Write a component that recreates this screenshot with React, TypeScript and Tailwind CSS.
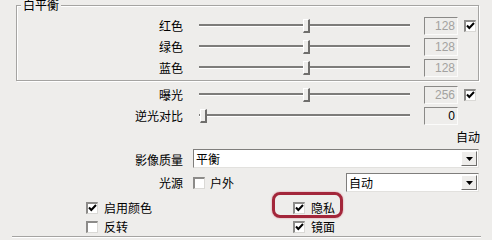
import React from "react";

function Check({ checked }: { checked?: boolean }) {
  return (
    <div className="w-[12px] h-[12px] shrink-0 bg-white border-t-2 border-l-2 border-t-[#8c8b89] border-l-[#8c8b89] border-r border-b border-r-[#dad9d6] border-b-[#dad9d6] flex items-center justify-center">
      {checked && (
        <svg width="9" height="8" viewBox="0 0 9 8">
          <polyline points="1,3.5 3.3,6 8,1" fill="none" stroke="#000" strokeWidth="2" />
        </svg>
      )}
    </div>
  );
}

function Slider({ pos }: { pos: number }) {
  return (
    <div className="relative w-[211px] h-[14px] flex items-center">
      <div className="w-full h-[3px] border-t-2 border-t-[#7d7c7a] border-b border-b-white" />
      <div
        className="absolute top-[0px] w-[7px] h-[14px] bg-[#eeedeb] border-t border-l border-t-white border-l-white border-r-2 border-b-2 border-r-[#6f6e6c] border-b-[#6f6e6c]"
        style={{ left: pos }}
      />
    </div>
  );
}

function NumBox({ value, enabled }: { value: string; enabled?: boolean }) {
  return (
    <div
      className={`w-[34px] h-[18px] shrink-0 border-t border-l border-t-[#8a8987] border-l-[#8a8987] border-r border-b border-r-[#fbfbfa] border-b-[#fbfbfa] flex items-center justify-end pr-[2px] font-['Liberation_Sans',sans-serif] text-[12px] ${
        enabled ? "text-black" : "text-[#a3a2a0]"
      }`}
    >
      {value}
    </div>
  );
}

function ArrowBtn() {
  return (
    <div className="w-[16px] h-[15px] shrink-0 bg-[#eeedeb] border-t border-l border-t-white border-l-white border-r border-b border-r-[#6f6e6c] border-b-[#6f6e6c] flex items-center justify-center">
      <svg width="7" height="4" viewBox="0 0 7 4">
        <polygon points="0,0 7,0 3.5,4" fill="#000" />
      </svg>
    </div>
  );
}

function Dropdown({ text, width }: { text: string; width: string }) {
  return (
    <div
      className={`${width} h-[19px] shrink-0 bg-white border-t border-l border-t-[#7f7e7c] border-l-[#7f7e7c] border-r border-b border-r-[#e2e1de] border-b-[#e2e1de] flex items-center justify-between pl-[2px] pr-[1px]`}
    >
      <span className="pt-[1px]">{text}</span>
      <ArrowBtn />
    </div>
  );
}

function SliderRow({
  label,
  labelW,
  pos,
  value,
  enabled,
  checked,
}: {
  label: string;
  labelW: string;
  pos: number;
  value: string;
  enabled?: boolean;
  checked?: boolean;
}) {
  return (
    <div className="flex items-center h-[21px]">
      <div className={`${labelW} text-right`}>{label}</div>
      <div className="ml-[16px]">
        <Slider pos={pos} />
      </div>
      <div className="ml-[14px]">
        <NumBox value={value} enabled={enabled} />
      </div>
      {checked !== undefined && (
        <div className="ml-[6px]">
          <Check checked={checked} />
        </div>
      )}
    </div>
  );
}

export default function App() {
  return (
    <div className="relative w-[492px] h-[240px] overflow-hidden bg-[#eeedeb] text-[12px] leading-none text-black font-['Noto_Sans_CJK_SC','Noto_Sans',sans-serif]">
      <div className="pt-[5px]">
        <div className="relative ml-[16px] w-[463px] h-[76px] border border-[#a5a4a2] shadow-[inset_1px_1px_0_#ffffff,1px_1px_0_#ffffff] pt-[9px]">
          <div className="absolute -top-[7px] left-[4px] px-[2px] bg-[#eeedeb]">白平衡</div>
          <SliderRow label="红色" labelW="w-[166px]" pos={104} value="128" checked />
          <SliderRow label="绿色" labelW="w-[166px]" pos={104} value="128" />
          <SliderRow label="蓝色" labelW="w-[166px]" pos={104} value="128" />
        </div>
      </div>
      <div className="mt-[3px]">
        <SliderRow label="曝光" labelW="w-[183px]" pos={104} value="256" checked />
        <SliderRow label="逆光对比" labelW="w-[183px]" pos={1} value="0" enabled />
      </div>
      <div className="h-[22px] flex items-center justify-end pr-[12px]">自动</div>
      <div className="mt-[1px] flex items-center h-[19px]">
        <div className="w-[183px] text-right pt-[3px]">影像质量</div>
        <div className="ml-[10px]">
          <Dropdown text="平衡" width="w-[286px]" />
        </div>
      </div>
      <div className="mt-[5px] flex items-center h-[19px] w-[479px]">
        <div className="w-[183px] text-right">光源</div>
        <div className="ml-[10px]">
          <Check />
        </div>
        <div className="ml-[5px]">户外</div>
        <div className="ml-auto">
          <Dropdown text="自动" width="w-[133px]" />
        </div>
      </div>
      <div className="mt-[6px] grid grid-cols-[207px_1fr] pl-[86px]">
        <div className="flex items-center h-[19px] gap-[6px]">
          <Check checked />
          <span>启用颜色</span>
        </div>
        <div className="flex items-center h-[19px] gap-[6px]">
          <Check checked />
          <span>隐私</span>
        </div>
        <div className="flex items-center h-[19px] gap-[6px]">
          <Check />
          <span>反转</span>
        </div>
        <div className="flex items-center h-[19px] gap-[6px]">
          <Check checked />
          <span>镜面</span>
        </div>
      </div>
      <div className="ml-[12px] w-[469px] h-[2px] border-t border-t-[#a5a4a2] border-b border-b-white" />
      <div className="absolute left-[272px] top-[192px] w-[71px] h-[26px] border-[3px] border-[#a3263a] rounded-[8px] shadow-[0_0_2px_#d9838f]" />
    </div>
  );
}
